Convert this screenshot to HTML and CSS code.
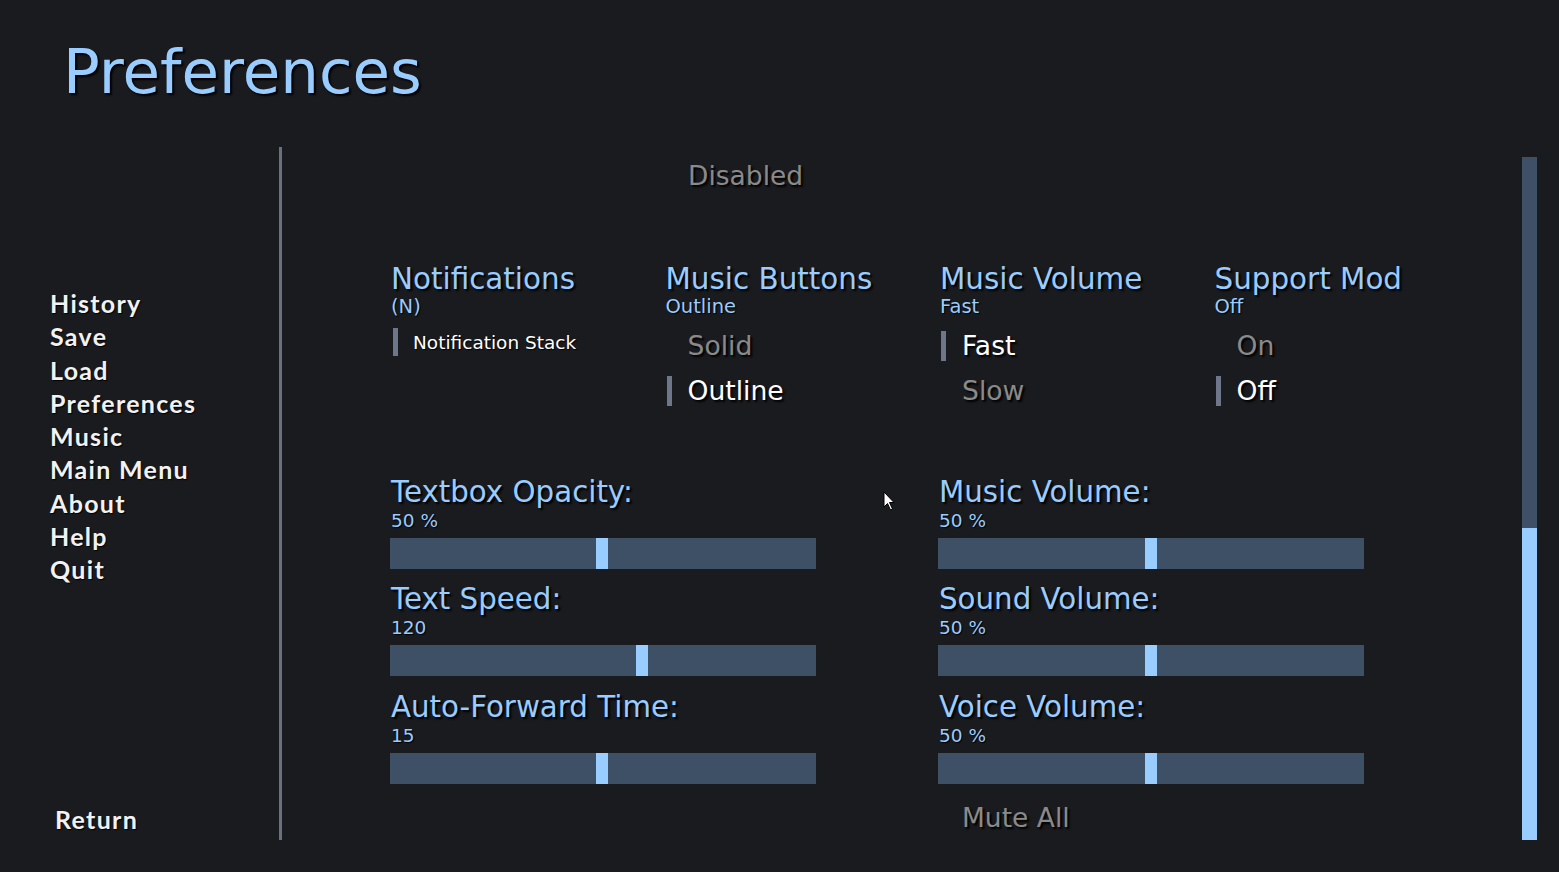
FILE: index.html
```html
<!DOCTYPE html>
<html lang="en">
<head>
<meta charset="utf-8">
<title>Preferences</title>
<link rel="stylesheet" href="styles.css">
</head>
<body>
<div class="screen">
  <header class="title-bar">
    <h1 class="title">Preferences</h1>
  </header>
  <div class="main">
    <nav class="sidebar">
      <ul class="menu">
        <li>History</li>
        <li>Save</li>
        <li>Load</li>
        <li>Preferences</li>
        <li>Music</li>
        <li>Main Menu</li>
        <li>About</li>
        <li>Help</li>
        <li>Quit</li>
      </ul>
      <div class="return">Return</div>
    </nav>
    <section class="content">
      <div class="disabled-row"><span class="btn-off">Disabled</span></div>

      <div class="radio-grid">
        <div class="group">
          <div class="group-title">Notifications</div>
          <div class="group-sub">(N)</div>
          <div class="opt opt-small sel"><span class="bar"></span><span class="opt-label">Notification Stack</span></div>
        </div>
        <div class="group">
          <div class="group-title">Music Buttons</div>
          <div class="group-sub">Outline</div>
          <div class="opt"><span class="bar"></span><span class="opt-label">Solid</span></div>
          <div class="opt sel"><span class="bar"></span><span class="opt-label">Outline</span></div>
        </div>
        <div class="group">
          <div class="group-title">Music Volume</div>
          <div class="group-sub">Fast</div>
          <div class="opt sel"><span class="bar"></span><span class="opt-label">Fast</span></div>
          <div class="opt"><span class="bar"></span><span class="opt-label">Slow</span></div>
        </div>
        <div class="group">
          <div class="group-title">Support Mod</div>
          <div class="group-sub">Off</div>
          <div class="opt"><span class="bar"></span><span class="opt-label">On</span></div>
          <div class="opt sel"><span class="bar"></span><span class="opt-label">Off</span></div>
        </div>
      </div>

      <div class="slider-grid">
        <div class="slider-col">
          <div class="slider">
            <div class="slider-label">Textbox Opacity:</div>
            <div class="slider-value">50 %</div>
            <div class="track"><span class="thumb" style="left:206px"></span></div>
          </div>
          <div class="slider">
            <div class="slider-label">Text Speed:</div>
            <div class="slider-value">120</div>
            <div class="track"><span class="thumb" style="left:246px"></span></div>
          </div>
          <div class="slider">
            <div class="slider-label">Auto-Forward Time:</div>
            <div class="slider-value">15</div>
            <div class="track"><span class="thumb" style="left:206px"></span></div>
          </div>
        </div>
        <div class="slider-col">
          <div class="slider">
            <div class="slider-label">Music Volume:</div>
            <div class="slider-value">50 %</div>
            <div class="track"><span class="thumb" style="left:207px"></span></div>
          </div>
          <div class="slider">
            <div class="slider-label">Sound Volume:</div>
            <div class="slider-value">50 %</div>
            <div class="track"><span class="thumb" style="left:207px"></span></div>
          </div>
          <div class="slider">
            <div class="slider-label">Voice Volume:</div>
            <div class="slider-value">50 %</div>
            <div class="track"><span class="thumb" style="left:207px"></span></div>
          </div>
          <div class="mute-row"><span class="btn-off">Mute All</span></div>
        </div>
      </div>
    </section>
    <div class="scrollbar"><div class="scroll-thumb"></div></div>
  </div>
  <svg class="cursor" width="12" height="20" viewBox="0 0 12 20" aria-hidden="true">
    <path d="M1 1 L1 16 L4.5 12.5 L7.5 19 L9.5 18 L6.5 11.5 L11 11.5 Z" fill="#ffffff" stroke="#000000" stroke-width="1"/>
  </svg>
</div>
</body>
</html>
```

FILE: styles.css
```css
html, body {
  margin: 0;
  padding: 0;
}
body {
  background: #1a1b1f;
  font-family: "DejaVu Sans", "Liberation Sans", sans-serif;
  color: #ffffff;
  overflow: hidden;
}
.screen {
  position: relative;
  width: 1559px;
  height: 872px;
}
.title-bar {
  height: 147px;
  box-sizing: border-box;
  padding: 37px 0 0 63px;
}
.title {
  margin: 0;
  font-weight: normal;
  font-size: 61px;
  line-height: 70px;
  color: #99ccff;
  text-shadow: 2px 2px 2px #000;
}
.main {
  display: flex;
  height: 693px;
}
.sidebar {
  width: 282px;
  flex: none;
  border-right: 3px solid #6b7080;
  display: flex;
  flex-direction: column;
  justify-content: space-between;
  box-sizing: border-box;
}
.menu {
  list-style: none;
  margin: 0;
  padding: 140px 0 0 50px;
  font-family: "Lato", "Open Sans", sans-serif;
  font-weight: 700;
  font-size: 25px;
  line-height: 33.3px;
  letter-spacing: 1.3px;
  color: #f2f2f2;
  text-shadow: 1px 1px 1px #000;
}
.return {
  padding: 0 0 4px 55px;
  font-family: "Lato", "Open Sans", sans-serif;
  font-weight: 700;
  font-size: 25px;
  line-height: 33.3px;
  letter-spacing: 1.3px;
  color: #f2f2f2;
  text-shadow: 1px 1px 1px #000;
}
.content {
  flex: 1;
  min-width: 0;
}
.btn-off {
  color: #8a8a8a;
  font-size: 26.5px;
  line-height: 36px;
  text-shadow: 2px 2px 2px #000;
}
.disabled-row {
  margin: 11px 0 0 406px;
  height: 36px;
}
.radio-grid {
  display: grid;
  grid-template-columns: repeat(4, 274.5px);
  margin: 68px 0 0 109px;
  height: 152.5px;
}
.group-title {
  font-size: 29.4px;
  line-height: 34px;
  color: #99ccff;
  white-space: nowrap;
  text-shadow: 2px 2px 2px #000;
}
.group-sub {
  font-size: 19.5px;
  line-height: 22px;
  color: #99ccff;
  margin-bottom: 5px;
  text-shadow: 1px 1px 1px #000;
}
.opt {
  display: flex;
  align-items: center;
  height: 45px;
}
.opt .bar {
  width: 5px;
  height: 30px;
  margin: 0 16px 0 1px;
  background: transparent;
}
.opt.sel .bar {
  background: #6e7689;
}
.opt-label {
  font-size: 26.6px;
  color: #8a8a8a;
  text-shadow: 2px 2px 2px #000;
  white-space: nowrap;
}
.opt.sel .opt-label {
  color: #ffffff;
}
.opt-small {
  height: 38px;
}
.opt-small .bar {
  height: 28px;
  margin-left: 2px;
  margin-right: 15px;
}
.opt-small .opt-label {
  font-size: 18.5px;
  text-shadow: 1px 1px 1px #000;
}
.slider-grid {
  display: grid;
  grid-template-columns: 426px 426px;
  column-gap: 122px;
  margin: 60px 0 0 108px;
}
.slider {
  margin-bottom: 13.5px;
}
.slider-label {
  font-size: 29.3px;
  line-height: 34px;
  color: #99ccff;
  padding-left: 1px;
  white-space: nowrap;
  text-shadow: 2px 2px 2px #000;
}
.slider-value {
  font-size: 18.5px;
  line-height: 22px;
  margin-top: 1px;
  color: #99ccff;
  padding-left: 1px;
  text-shadow: 1px 1px 1px #000;
}
.track {
  position: relative;
  height: 31px;
  margin-top: 6px;
  background: #3d5066;
}
.thumb {
  position: absolute;
  top: 0;
  width: 12px;
  height: 31px;
  background: #99ccff;
}
.mute-row {
  margin: 16.5px 0 0 24px;
  height: 36px;
  line-height: 36px;
}
.scrollbar {
  width: 15px;
  flex: none;
  margin: 10px 22px 0 0;
  height: 683px;
  background: #3d5066;
  display: flex;
  flex-direction: column;
  justify-content: flex-end;
}
.scroll-thumb {
  height: 312px;
  background: #99ccff;
}
.cursor {
  position: absolute;
  left: 883px;
  top: 491px;
}
```
